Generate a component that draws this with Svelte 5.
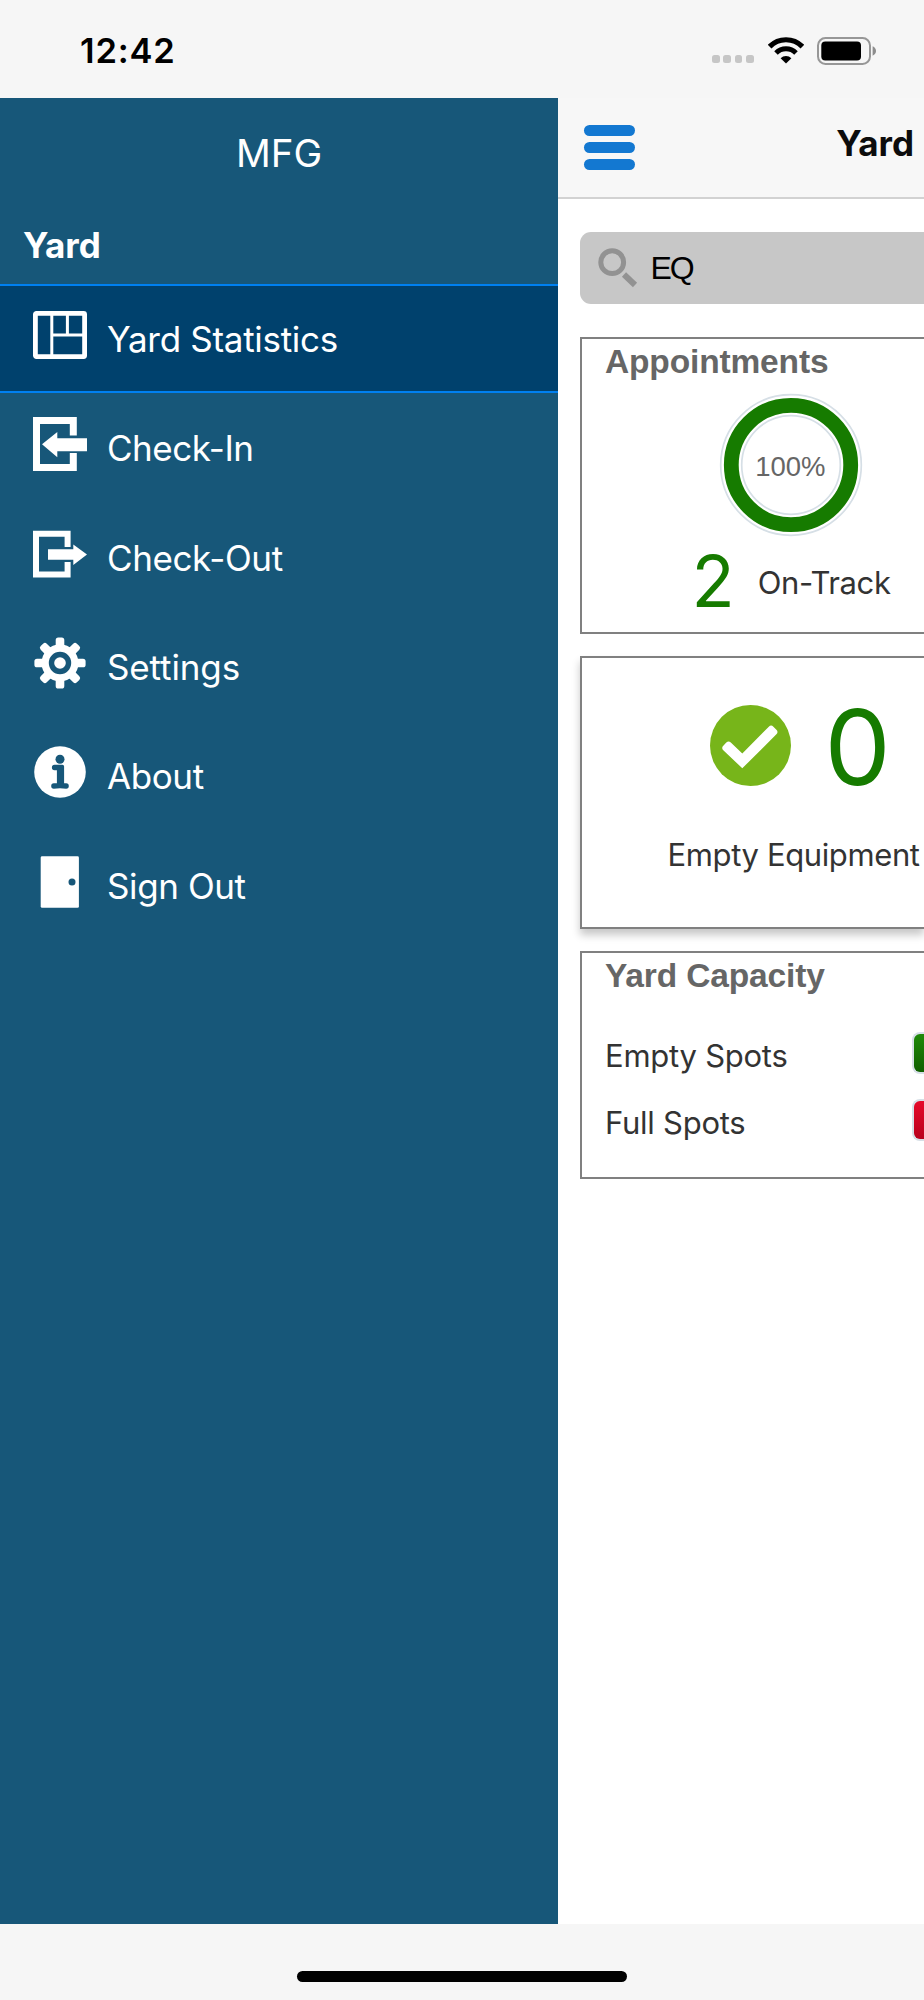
<script>
  let search = $state("EQ");
  let selected = $state("stats");

  const menu = [
    { id: "stats", label: "Yard Statistics", spacing: -0.3 },
    { id: "in", label: "Check-In", spacing: -0.5 },
    { id: "out", label: "Check-Out", spacing: -0.4 },
    { id: "settings", label: "Settings", spacing: -0.12 },
    { id: "about", label: "About", spacing: -0.4 },
    { id: "signout", label: "Sign Out", spacing: -0.4 },
  ];

  const capacity = [
    { label: "Empty Spots", kind: "empty" },
    { label: "Full Spots", kind: "full" },
  ];
</script>

<div class="screen">
  <div class="status-bar">
    <span class="time">12:42</span>
    <div class="status-icons">
      <div class="dots"><i></i><i></i><i></i><i></i></div>
      <svg class="wifi" width="36" height="27" viewBox="0 0 36 27">
        <path d="M1.6 9.6a23 23 0 0 1 32.8 0" fill="none" stroke="#000" stroke-width="5.2" />
        <path d="M8 15.9a14.2 14.2 0 0 1 20 0" fill="none" stroke="#000" stroke-width="5" />
        <path d="M12.6 21.2a7.8 7.8 0 0 1 10.8 0L18 26.6z" />
      </svg>
      <svg width="60" height="28" viewBox="0 0 60 28">
        <rect x="1" y="1" width="52" height="26" rx="7.5" fill="none" stroke="#979797" stroke-width="2" />
        <rect x="4.3" y="4.5" width="39.7" height="19" rx="4" />
        <path d="M55.6 9.3q3.4 1.5 3.4 4.7t-3.4 4.7z" fill="#8d8d8d" />
      </svg>
    </div>
  </div>

  <div class="body">
    <nav class="sidebar">
      <div class="company">MFG</div>
      <div class="section">Yard</div>
      {#each menu as item}
        <button
          class="menu-item"
          class:active={selected === item.id}
          onclick={() => (selected = item.id)}
        >
          <svg class="menu-icon" width="54" height="54" viewBox="0 0 54 54">
            {#if item.id === "stats"}
              <rect x="2.4" y="5.4" width="49.2" height="43.2" rx="1" fill="none" stroke="#fff" stroke-width="4.8" />
              <path d="M18.8 5v44M18.8 27h32M34.4 5v22" fill="none" stroke="#fff" stroke-width="3" />
            {:else if item.id === "in"}
              <path d="M40.3 18.5V3.5H3.5v47h36.8V36" fill="none" stroke="#fff" stroke-width="7" />
              <path d="M9 27.3 24.3 15v6.2H54v13H24.3v6z" />
            {:else if item.id === "out"}
              <path d="M34.6 20V6.8H3v40.6h31.6V35" fill="none" stroke="#fff" stroke-width="6" />
              <path d="M15 22.2h25.3V17.5L54 27.6 40.3 38v-5.2H15z" />
            {:else if item.id === "settings"}
              {#each [0, 45, 90, 135] as angle}
                <path
                  transform="rotate({angle} 27 27)"
                  d="M22.7 12V4q0-2.6 2.6-2.6h3.4q2.6 0 2.6 2.6v8zM22.7 42v8q0 2.6 2.6 2.6h3.4q2.6 0 2.6-2.6v-8z"
                />
              {/each}
              <circle cx="27" cy="27" r="14.8" fill="none" stroke="#fff" stroke-width="7.2" />
              <circle cx="27" cy="27" r="5.8" />
            {:else if item.id === "about"}
              <circle cx="27" cy="27" r="25.8" />
              <circle class="cut" cx="27" cy="14.2" r="4.5" />
              <path
                class="cut"
                d="M21.5 19.8h8q1.6 0 1.6 1.6v16.9h2.1q2.6 0 2.6 2.7t-2.6 2.7q-6.2-.8-12.4 0-2.6 0-2.6-2.7t2.6-2.7h3.1V25.2h-2.4q-2.6 0-2.6-2.7t2.6-2.7z"
              />
            {:else}
              <rect x="7.7" y="1.3" width="38.2" height="51.5" rx="1.4" />
              <circle class="cut" cx="39" cy="27" r="3.5" />
            {/if}
          </svg>
          <span style="letter-spacing: {item.spacing}px">{item.label}</span>
        </button>
      {/each}
    </nav>

    <main class="content">
      <header class="top-bar">
        <button class="hamburger" aria-label="Menu"><i></i><i></i><i></i></button>
        <h1>Yard</h1>
      </header>

      <div class="search">
        <svg width="40" height="40" viewBox="0 0 40 40">
          <circle cx="14.2" cy="14.2" r="11.4" fill="none" stroke="#929292" stroke-width="5" />
          <path d="M26 26.5 37 37" stroke="#929292" stroke-width="6" />
        </svg>
        <input type="text" aria-label="Search" bind:value={search} />
      </div>

      <section class="card appointments">
        <h2>Appointments</h2>
        <div class="track">
          <svg width="144" height="144" viewBox="0 0 144 144">
            <circle cx="72" cy="72" r="70.3" fill="none" stroke="#d6dfe6" stroke-width="1.7" />
            <circle cx="72" cy="72" r="59.7" fill="none" stroke="#167b00" stroke-width="14.8" />
            <circle cx="72" cy="72" r="49.3" fill="none" stroke="#d6dfe6" stroke-width="1.7" />
            <text x="71.3" y="83.4" text-anchor="middle">100%</text>
          </svg>
          <div class="track-row">
            <span class="track-count">2</span>
            <span class="label on-track">On-Track</span>
          </div>
        </div>
      </section>

      <section class="card equipment">
        <div class="equipment-row">
          <svg width="81" height="81" viewBox="0 0 81 81">
            <circle cx="40.5" cy="40.5" r="40.5" fill="#77b51a" />
            <path
              d="M13.3 45.2q-2.2-2.3 0-4.5l3-3.2q2.3-2.2 4.5 0L32.3 48.6l26.5-26.9q2.3-2.3 4.6 0l3 3.1q2.2 2.2 0 4.5L32.3 63.3z"
              fill="#fff"
            />
          </svg>
          <span class="equipment-count">0</span>
        </div>
        <span class="label equipment-label">Empty Equipment</span>
      </section>

      <section class="card capacity">
        <h2>Yard Capacity</h2>
        <div class="capacity-rows">
          {#each capacity as row}
            <div class="capacity-row">
              <span class="label">{row.label}</span>
              <div class="bar {row.kind}"></div>
            </div>
          {/each}
        </div>
      </section>
    </main>
  </div>

  <footer class="bottom-bar"><div class="home-indicator"></div></footer>
</div>

<style>
  :global(body) {
    margin: 0;
    background: #f6f6f6;
  }

  .screen {
    display: flex;
    flex-direction: column;
    width: 924px;
    height: 2000px;
    overflow: hidden;
    background: #f6f6f6;
    font-family: Inter, "Liberation Sans", sans-serif;
  }

  button {
    border: 0;
    padding: 0;
    background: none;
    font: inherit;
    text-align: left;
  }

  .status-bar {
    box-sizing: border-box;
    display: flex;
    align-items: center;
    justify-content: space-between;
    height: 98px;
    padding: 3px 47.5px 0 80px;
  }

  .time {
    font-size: 34.5px;
    font-weight: 600;
    letter-spacing: 0.8px;
  }

  .status-icons {
    display: flex;
    align-items: center;
  }

  .dots {
    display: flex;
    gap: 3.4px;
    margin: 17px 14px 0 0;
  }

  .dots i {
    width: 7.8px;
    height: 7.6px;
    border-radius: 2.5px;
    background: #c6c6c6;
  }

  .wifi {
    margin-right: 13px;
  }

  .body {
    display: flex;
    height: 1826px;
  }

  .sidebar {
    display: flex;
    flex-direction: column;
    width: 558px;
    background: #175779;
    color: #fff;
  }

  .company {
    height: 110px;
    line-height: 110px;
    text-align: center;
    font-size: 38.5px;
  }

  .section {
    height: 75.5px;
    line-height: 75.5px;
    padding-left: 23px;
    font-size: 35px;
    font-weight: 700;
    letter-spacing: 0;
  }

  .menu-item {
    box-sizing: border-box;
    display: flex;
    align-items: center;
    height: 109.3px;
    padding-left: 32.5px;
    color: #fff;
    font-size: 35px;
  }

  .menu-item.active {
    border-top: 2px solid #0080f0;
    border-bottom: 2px solid #0080f0;
    background: #00416d;
  }

  .menu-item span {
    padding: 2px 0 0 20.5px;
  }

  .menu-icon {
    margin-bottom: 6px;
    fill: #fff;
  }

  .cut {
    fill: #175779;
  }

  .content {
    flex: 1;
    min-width: 0;
    background: #fff;
  }

  .top-bar {
    box-sizing: border-box;
    display: flex;
    align-items: center;
    justify-content: space-between;
    height: 101px;
    padding: 0 10px 0 25.5px;
    border-bottom: 2px solid #d2d2d2;
    background: #f7f7f7;
  }

  .hamburger {
    display: flex;
    flex-direction: column;
    gap: 5.6px;
  }

  .hamburger i {
    width: 51.5px;
    height: 11.2px;
    border-radius: 5.6px;
    background: #1378d1;
  }

  h1 {
    margin: 0;
    padding-bottom: 9px;
    color: #0c0c0c;
    font-size: 35px;
    font-weight: 700;
    letter-spacing: 0;
  }

  .search {
    display: flex;
    align-items: center;
    height: 72px;
    margin: 33px 0 33px 22px;
    border-radius: 11px 0 0 11px;
    background: #c7c7c7;
  }

  .search svg {
    margin-left: 18px;
  }

  .search input {
    width: 200px;
    margin-left: 12.5px;
    padding: 0;
    border: 0;
    outline: 0;
    background: none;
    color: #000;
    font: 32px "Liberation Sans", Arial, sans-serif;
    letter-spacing: -2px;
  }

  .card {
    box-sizing: border-box;
    margin-left: 22px;
    border: 2px solid #808080;
    border-right: 0;
    background: #fff;
  }

  h2 {
    margin: 0;
    padding: 1px 0 0 23px;
    color: #666;
    font: bold 33.5px/44px "Liberation Sans", Arial, sans-serif;
    letter-spacing: -0.15px;
  }

  .label {
    color: #333;
    font-size: 31px;
    letter-spacing: -0.25px;
    white-space: nowrap;
  }

  .appointments {
    height: 297px;
    margin-bottom: 22px;
    overflow: hidden;
  }

  .track {
    display: flex;
    flex-direction: column;
    align-items: center;
    width: 418px;
    margin-top: 9px;
  }

  .track text {
    fill: #666;
    font: 27.5px "Liberation Sans", Arial, sans-serif;
  }

  .track-row {
    display: flex;
    align-items: center;
    gap: 23px;
    height: 88px;
  }

  .track-count {
    color: #167b00;
    font-size: 70.8px;
  }

  .on-track {
    padding-top: 2px;
    letter-spacing: -0.4px;
  }

  .equipment {
    display: flex;
    flex-direction: column;
    height: 272.5px;
    margin-bottom: 22.5px;
    box-shadow: 0 6px 8px rgba(0, 0, 0, 0.22);
  }

  .equipment-row {
    display: flex;
    align-items: center;
    gap: 33.5px;
    height: 176px;
    padding-left: 128px;
  }

  .equipment-row svg {
    margin-bottom: 2px;
  }

  .equipment-count {
    color: #167b00;
    font-size: 105px;
  }

  .equipment-label {
    padding-left: 85.5px;
    line-height: 42px;
    letter-spacing: -0.38px;
  }

  .capacity {
    height: 228px;
  }

  .capacity-rows {
    margin-top: 23px;
  }

  .capacity-row {
    display: flex;
    align-items: center;
    justify-content: space-between;
    height: 67.2px;
    padding-left: 23px;
  }

  .capacity-row .label {
    padding-top: 2px;
  }

  .bar {
    box-sizing: border-box;
    width: 12px;
    height: 42px;
    margin-bottom: 3px;
    border: 2px solid #d6dfe6;
    border-right: 0;
    border-radius: 8px 0 0 8px;
  }

  .bar.empty {
    background: linear-gradient(#1f8a08, #105f00);
  }

  .bar.full {
    background: linear-gradient(#e60a2a, #b8001c);
  }

  .bottom-bar {
    display: flex;
    justify-content: center;
    height: 76px;
  }

  .home-indicator {
    width: 330px;
    height: 11px;
    margin-top: 47px;
    border-radius: 5.5px;
    background: #000;
  }
</style>
